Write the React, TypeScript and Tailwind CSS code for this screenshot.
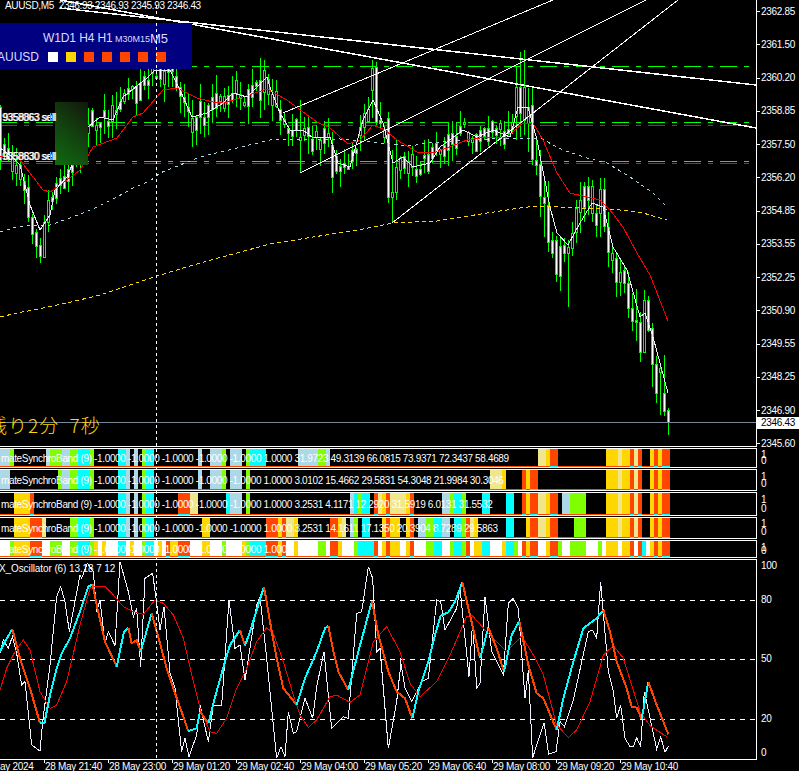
import React from 'react';

const FONT = "font-['Liberation_Sans',Arial,sans-serif]";
const GREEN = '#00ff00';

type Pt = [number, number];

// price chart lines, page coordinates
const maFast: Pt[] = [[0,148],[10,155],[20,165],[30,205],[40,230],[50,215],[55,190],[67,177],[88,127],[100,117],[113,120],[123,97],[147,78],[155,70],[170,70],[180,90],[192,117],[207,113],[223,103],[233,93],[247,97],[267,77],[270,87],[280,113],[290,130],[303,130],[313,138],[330,137],[338,163],[350,167],[363,120],[373,100],[383,123],[393,163],[403,157],[413,167],[430,163],[440,147],[463,130],[477,137],[493,130],[510,137],[518,107],[528,107],[537,140],[550,207],[557,233],[568,245],[580,223],[592,203],[603,207],[613,247],[627,270],[640,317],[645,313],[653,337],[668,393]];
const maRed: Pt[] = [[0,157],[15,155],[20,160],[33,177],[43,190],[50,192],[67,180],[80,170],[93,147],[117,138],[133,117],[143,113],[163,90],[177,88],[197,98],[217,103],[227,102],[240,98],[267,89],[287,100],[303,112],[317,122],[330,128],[348,144],[360,140],[373,125],[385,130],[397,140],[417,152],[433,153],[447,148],[467,140],[487,137],[507,137],[523,123],[533,123],[543,140],[557,173],[570,193],[587,197],[600,200],[610,210],[623,227],[637,253],[650,275],[668,321]];
const maBlue: Pt[] = [[0,232],[17,227],[33,225],[50,225],[67,219],[83,213],[97,207],[117,197],[133,188],[150,181],[160,173],[200,157],[270,140],[340,139],[410,146],[427,143],[503,138],[540,138],[563,150],[587,158],[607,163],[630,177],[653,193],[667,207]];
const maGold: Pt[] = [[0,317],[17,313],[33,310],[67,303],[100,295],[133,284],[157,276],[200,263],[233,254],[270,244],[363,229],[393,223],[437,221],[487,213],[520,208],[537,206],[580,208],[620,210],[643,213],[667,220]];

const pts = (p: Pt[]) => p.map(([x, y]) => `${x},${y}`).join(' ');

const yAt = (line: Pt[], x: number) => {
    for (let i = 1; i < line.length; i++) {
        if (x <= line[i][0]) {
            const [x0, y0] = line[i - 1];
            const [x1, y1] = line[i];
            return y0 + ((x - x0) / (x1 - x0)) * (y1 - y0);
        }
    }
    return line[line.length - 1][1];
};

// x: [top, bottom, high, low, filled]
const knownCandles: Record<number, [number, number, number, number, boolean]> = {
    0: [107, 160, 105, 170, true], 28: [187, 217, 175, 222, true], 32: [217, 234, 214, 244, true], 36: [232, 246, 229, 258, true],
    40: [245, 256, 238, 263, true], 44: [222, 257, 215, 258, false], 48: [200, 222, 190, 232, false],
    260: [80, 100, 58, 118, true], 264: [70, 92, 60, 110, false], 300: [137, 140, 100, 173, false], 332: [145, 177, 132, 193, true],
    372: [68, 90, 60, 118, false], 376: [67, 122, 62, 125, true], 388: [118, 197, 112, 203, true], 392: [192, 197, 150, 223, false],
    396: [167, 192, 140, 200, false], 516: [87, 116, 67, 140, false], 520: [87, 113, 52, 137, true], 524: [87, 120, 50, 135, false],
    528: [107, 123, 88, 152, false], 532: [105, 159, 88, 165, true], 536: [160, 165, 140, 175, true], 540: [164, 196, 150, 217, true],
    544: [197, 203, 181, 237, true], 548: [205, 242, 181, 252, true], 552: [240, 253, 232, 258, true], 556: [240, 274, 236, 282, true],
    560: [246, 276, 238, 291, true], 564: [245, 253, 238, 262, true], 568: [247, 253, 240, 307, false], 572: [233, 248, 222, 256, false],
    576: [208, 232, 200, 243, false], 580: [200, 212, 182, 233, false], 584: [186, 207, 182, 222, true], 588: [186, 200, 177, 215, true],
    592: [186, 213, 180, 222, false], 596: [213, 225, 204, 237, true], 600: [189, 213, 178, 237, false], 604: [189, 226, 178, 232, true],
    608: [227, 252, 212, 267, true], 612: [253, 260, 245, 273, false], 616: [258, 282, 254, 297, true], 620: [272, 282, 258, 296, false],
    624: [270, 283, 266, 293, true], 628: [283, 308, 272, 318, true], 632: [308, 321, 293, 331, true], 636: [320, 322, 289, 341, true],
    640: [322, 352, 312, 362, true], 644: [300, 352, 290, 352, false], 648: [300, 330, 296, 332, true], 652: [328, 364, 323, 387, true],
    656: [364, 393, 356, 403, true], 660: [368, 372, 363, 415, false], 664: [393, 411, 355, 416, true], 668: [410, 422, 408, 435, true],
};

const makeCandles = () => {
    let seed = 20240528;
    const r = () => {
        seed = (seed * 1664525 + 1013904223) % 4294967296;
        return seed / 4294967296;
    };
    const out: { x: number; top: number; bottom: number; hi: number; lo: number; fill: boolean }[] = [];
    for (let x = 0; x <= 668; x += 4) {
        const c = yAt(maFast, x) + (r() - 0.5) * 16;
        const h = 2 + r() * 15;
        let top = Math.round(c - h / 2);
        let bottom = Math.round(c + h / 2);
        let hi = Math.round(top - r() * 18);
        let lo = Math.round(bottom + r() * 18);
        let fill = r() < 0.62;
        const known = knownCandles[x];
        if (known) [top, bottom, hi, lo, fill] = known;
        out.push({ x, top, bottom, hi, lo, fill });
    }
    return out;
};
const candles = makeCandles();

const priceLabels = ['2362.85','2361.50','2360.20','2358.85','2357.50','2356.20','2354.85','2353.55','2352.25','2350.90','2349.55','2348.25','2346.90','2345.60'];
const levelLines = [
    { y: 66, c: GREEN }, { y: 122, c: GREEN }, { y: 125, c: '#ff0000' }, { y: 161, c: GREEN }, { y: 163, c: '#ff0000' },
];

const MainChart = () => (
    <svg width={756} height={446} className="block" shapeRendering="crispEdges">
        {levelLines.map((l) => (
            <line key={l.y} x1={0} x2={756} y1={l.y + 0.5} y2={l.y + 0.5} stroke={l.c} strokeDasharray="17 7 5 7" />
        ))}
        {candles.map((c) => (
            <g key={c.x}>
                <line x1={c.x + 0.5} x2={c.x + 0.5} y1={c.hi} y2={c.lo} stroke={GREEN} />
                <rect x={c.x - 0.5} y={c.top + 0.5} width={2} height={Math.max(c.bottom - c.top, 1)} fill={c.fill ? '#ffffff' : '#000000'} stroke={GREEN} />
            </g>
        ))}
        <polyline points={pts(maGold)} fill="none" stroke="#ffd700" strokeDasharray="4 3" />
        <polyline points={pts(maBlue)} fill="none" stroke="#add8e6" strokeDasharray="3 4" />
        <polyline points={pts(maRed)} fill="none" stroke="#ff0000" />
        <polyline points={pts(maFast)} fill="none" stroke="#e4f2f6" />
        {/* trend lines */}
        <line x1={300} y1={173} x2={650} y2={-2} stroke="#ffffff" />
        <line x1={283} y1={113} x2={560} y2={-3} stroke="#ffffff" />
        <line x1={392} y1={223} x2={678} y2={0} stroke="#ffffff" />
        <line x1={60} y1={8} x2={756} y2={85} stroke="#ffffff" strokeWidth={1.5} />
        <line x1={60} y1={0} x2={756} y2={128} stroke="#ffffff" strokeWidth={1.5} />
        <line x1={0} x2={756} y1={422.5} y2={422.5} stroke="#778899" />
    </svg>
);

const BAND_COLORS: Record<string, string> = {
    L: '#add8e6', G: '#7fff00', C: '#00ffff', Y: '#ffd700', O: '#ff4500', K: '#f0e68c', W: '#ffffff',
};

const parseSegs = (s: string, off: number) =>
    s.split(' ').map((t) => {
        const [a, b] = t.slice(1).split('-').map(Number);
        return { c: t[0], x: (a + off) / 3, w: (b - a) / 3 };
    });

const RIGHT_TAIL = 'Y618-654 K654-666 Y666-690 O690-702 K702-714 O714-726 Y750-762 O762-774 Y774-786 O786-810';
const MID = 'C354-378 L378-390 L402-414 G426-438 C438-462';

const bands = [
    {
        h: 'h-[20px]', inner: 18, leading: 'leading-[6px]',
        left: `L0-30 G30-42 L138-150 G150-186 L186-210 G210-234 C234-270 G270-282 ${MID} L594-606 L630-666 G666-678 L690-726 G738-750 C750-798 L894-954 G954-978 L978-990`,
        right: `K414-438 Y438-450 O450-474 ${RIGHT_TAIL}`,
        text: 'mateSynchroBand (9) -1.0000 -1.0000 -1.0000 -1.0000 -1.0000 1.0000 31.9723 49.3139 66.0815 73.9371 72.3437 58.4689',
    },
    {
        h: 'h-[22px]', inner: 20, leading: 'leading-[7px]',
        left: `L0-30 G174-186 L186-210 G210-234 C234-270 G270-282 ${MID} L594-606 L630-666 G666-678 L690-726 G738-750`,
        right: `K270-306 Y306-318 O366-378 Y378-390 O390-414 ${RIGHT_TAIL}`,
        text: 'mateSynchroBand (9) -1.0000 -1.0000 -1.0000 -1.0000 -1.0000 1.0000 3.0102 15.4662 29.5831 54.3048 21.9984 30.3046',
    },
    {
        h: 'h-[24px]', inner: 22, leading: 'leading-[9px]',
        left: `Y42-90 O90-102 ${MID} O534-570 K570-594 C678-690 L690-726 G738-750 L1050-1062 C1062-1074 G1074-1086 C1086-1110 O1122-1134 K1134-1146 Y1146-1158 O1158-1170 K1170-1200`,
        right: `K0-18 Y18-30 O30-42 L126-150 G150-162 C162-186 G186-198 C246-270 C318-342 O366-378 Y378-390 O390-414 K414-438 Y438-450 O450-474 L486-510 G510-558 ${RIGHT_TAIL}`,
        text: 'mateSynchroBand (9) -1.0000 -1.0000 -1.0000 -1.0000 -1.0000 1.0000 3.2531 4.1171 12.2920 31.5919 6.0131 31.5532',
    },
    {
        h: 'h-[22px]', inner: 20, leading: 'leading-[8px]',
        left: `Y42-90 O90-126 K126-138 G210-234 C234-270 G270-282 ${MID} Y606-630 O798-834 Y834-846 O846-858 K858-882 Y882-894 O990-1014 Y1014-1026 K1026-1038 L1050-1062 G1062-1074 C1086-1110 Y1146-1158 O1158-1170 Y1170-1200`,
        right: `Y18-30 O30-42 L54-78 G78-102 C102-126 L126-150 C162-186 G186-198 O198-210 K210-222 Y222-234 C318-342 Y378-390 O390-414 K414-438 Y438-450 O450-474 G522-558 ${RIGHT_TAIL}`,
        text: 'mateSynchroBand (9) -1.0000 -1.0000 -1.0000 -1.0000 -1.0000 1.0000 3.2531 14.1611 17.1350 20.3904 8.7289 29.5863',
    },
    {
        h: 'h-[18px]', inner: 16, leading: 'leading-[3px]',
        left: 'W0-30 G30-42 Y42-90 O90-126 W126-150 G150-186 W186-210 G210-234 C234-270 G270-282 Y282-294 W294-306 Y306-318 W318-354 C354-378 W378-390 Y390-402 W402-426 G426-438 C438-462 W462-474 Y474-486 W486-498 O498-510 Y510-534 O534-570 W570-606 Y606-630 W630-666 G666-678 W678-726 Y726-738 G738-750 C750-798 O798-834 Y834-846 O846-858 W858-882 Y882-894 W894-954 G954-978 W978-990 O990-1014 Y1014-1026 W1026-1062 G1062-1074 C1074-1122 O1122-1134 W1134-1146 Y1146-1158 O1158-1170 Y1170-1200',
        right: 'W0-18 Y18-30 O30-42 W42-78 G78-102 C102-126 W126-150 G150-162 C162-186 G186-198 O198-210 W210-222 Y222-246 C246-270 W270-306 Y306-318 C318-342 G342-354 W354-366 O366-378 Y378-390 O390-414 W414-438 Y438-450 O450-474 G474-486 W486-510 G510-558 W558-594 G594-606 W606-618 Y618-654 W654-666 Y666-690 O690-702 W702-714 O714-726 C726-738 W738-750 Y750-762 O762-774 Y774-786 O786-810',
        text: 'mateSynchroBand (9) -1.0000 -1.0000 -1.0000 -1.0000 -1.0000 1.0000',
    },
];

const BandPane = ({ band }: { band: (typeof bands)[number] }) => {
    const segs = [...parseSegs(band.left, 0), ...parseSegs(band.right, 1200)];
    const line = band.inner - 1;
    return (
        <div className={`flex ${band.h}`}>
            <div className="relative w-[757px] border-y border-r border-white overflow-hidden">
                <svg width={756} height={band.inner} className="block" shapeRendering="crispEdges">
                    {segs.map((s, i) => (
                        <rect key={i} x={s.x} y={0} width={s.w} height={line} fill={BAND_COLORS[s.c]} />
                    ))}
                    <rect x={0} y={line} width={670} height={1} fill="#ff4500" />
                    {segs.filter((s) => s.c === 'O').map((s, i) => (
                        <rect key={i} x={s.x} y={line} width={s.w} height={1} fill="#00ffff" />
                    ))}
                </svg>
                <span className="absolute left-[1px] top-1/2 -translate-y-1/2 whitespace-pre text-[10px] tracking-[-0.35px] text-white">
                    {band.text}
                </span>
            </div>
            <div className={`flex flex-col justify-center pl-[4px] text-[10px] text-white ${band.leading}`}>
                <span>1</span>
                <span>0</span>
            </div>
        </div>
    );
};

// oscillator traces, in reference crop units (3x, origin y=555)
type Z = Pt[];
const toPage = (p: Z, off = 0): string => p.map(([x, y]) => `${(x + off) / 3},${555 + y / 3}`).join(' ');

const whiteL: Z = [[0,295],[10,255],[25,280],[37,245],[50,295],[65,390],[75,380],[95,570],[120,588],[128,500],[150,330],[170,125],[182,95],[195,140],[208,230],[240,60],[245,70],[262,25],[280,50],[290,170],[300,135],[315,265],[325,230],[345,272],[360,20],[385,110],[400,185],[410,160],[422,335],[435,70],[458,55],[468,130],[480,225],[492,155],[510,355],[525,400],[545,590],[555,550],[567,605],[590,540],[600,450],[625,560],[640,450],[665,450],[687,135],[705,280],[720,270],[735,375],[770,150],[780,125],[800,310],[830,610],[843,575],[855,605],[865,470],[880,535],[890,530],[915,430],[938,490],[950,395],[972,290],[995,520],[1030,485],[1045,490],[1070,175],[1085,170],[1105,35],[1118,70],[1130,290],[1140,280],[1165,580],[1190,440],[1200,350]];
const whiteR: Z = [[0,310],[15,400],[35,440],[65,380],[85,370],[110,135],[122,140],[135,225],[170,160],[180,100],[207,365],[218,200],[230,400],[240,385],[255,125],[275,290],[310,360],[325,145],[340,130],[355,160],[375,430],[385,345],[398,608],[432,503],[446,597],[468,590],[480,500],[493,515],[520,435],[565,230],[578,225],[590,250],[602,80],[625,350],[640,410],[650,490],[662,450],[675,550],[690,575],[700,575],[710,548],[722,575],[733,410],[770,582],[782,545],[795,592],[805,573]];
const redL: Z = [[0,405],[20,340],[45,290],[70,255],[90,285],[120,410],[150,460],[170,450],[200,380],[240,210],[270,100],[280,93],[315,95],[340,120],[370,155],[400,170],[430,178],[465,135],[490,145],[520,180],[550,250],[580,380],[600,460],[630,530],[650,535],[680,490],[710,400],[740,340],[770,260],[800,218],[820,235],[850,320],[880,420],[900,480],[925,517],[950,495],[990,425],[1010,420],[1050,442],[1080,420],[1120,260],[1160,215],[1200,290]];
const redR: Z = [[0,290],[30,385],[60,425],[110,380],[150,300],[200,185],[215,180],[260,230],[320,290],[365,243],[400,300],[430,360],[470,510],[505,547],[530,525],[570,440],[610,300],[640,272],[670,310],[720,470],[750,512],[800,545]];

const thick: { up: boolean; off: number; p: Z }[] = [
    { up: true, off: 0, p: [[0,290],[15,260],[37,222]] },
    { up: false, off: 0, p: [[37,222],[60,310],[90,400],[120,505]] },
    { up: true, off: 0, p: [[120,505],[133,505],[150,420],[170,340],[185,295],[210,250],[240,170],[265,95],[278,88]] },
    { up: false, off: 0, p: [[278,88],[290,150],[315,260],[350,335]] },
    { up: true, off: 0, p: [[350,335],[372,230],[385,218]] },
    { up: false, off: 0, p: [[385,218],[395,265],[410,255],[422,290]] },
    { up: true, off: 0, p: [[422,290],[455,175]] },
    { up: false, off: 0, p: [[455,175],[480,265],[500,340],[520,400],[565,528]] },
    { up: true, off: 0, p: [[565,528],[590,520],[600,470]] },
    { up: false, off: 0, p: [[600,470],[625,505]] },
    { up: true, off: 0, p: [[625,505],[640,445],[675,320],[690,270],[720,225]] },
    { up: false, off: 0, p: [[720,225],[735,272]] },
    { up: true, off: 0, p: [[735,272],[750,230],[792,95]] },
    { up: false, off: 0, p: [[792,95],[810,200],[830,310],[850,400],[890,450]] },
    { up: true, off: 0, p: [[890,450],[915,370],[950,290],[975,220],[985,212]] },
    { up: false, off: 0, p: [[985,212],[1000,290],[1015,350],[1045,405]] },
    { up: true, off: 0, p: [[1045,405],[1075,290],[1116,138]] },
    { up: false, off: 0, p: [[1116,138],[1135,240],[1165,350],[1190,410],[1200,418]] },
    { up: false, off: 1200, p: [[0,418],[15,430],[37,490]] },
    { up: true, off: 1200, p: [[37,490],[55,410],[85,320],[105,240],[122,182],[145,172],[165,140],[187,82]] },
    { up: false, off: 1200, p: [[187,82],[210,180],[240,310]] },
    { up: true, off: 1200, p: [[240,310],[265,218]] },
    { up: false, off: 1200, p: [[265,218],[290,280],[312,350]] },
    { up: true, off: 1200, p: [[312,350],[335,240],[358,198]] },
    { up: false, off: 1200, p: [[358,198],[385,330],[410,415],[430,430],[470,525]] },
    { up: true, off: 1200, p: [[470,525],[490,430],[520,320],[550,220],[590,190],[610,165]] },
    { up: false, off: 1200, p: [[610,165],[630,230],[650,320],[680,400],[695,455],[710,458],[725,492]] },
    { up: true, off: 1200, p: [[725,492],[745,380]] },
    { up: false, off: 1200, p: [[745,380],[770,450],[805,538]] },
];

const OscChart = () => (
    <svg width={756} height={199} viewBox="0 560 756 199" className="block" shapeRendering="crispEdges">
        {[600, 659, 719].map((y) => (
            <line key={y} x1={0} x2={756} y1={y + 0.5} y2={y + 0.5} stroke="#ffffff" strokeDasharray="5 5" />
        ))}
        <polyline points={toPage(whiteL) + ' ' + toPage(whiteR, 1200)} fill="none" stroke="#f0f0ff" strokeWidth={1} />
        <polyline points={toPage(redL) + ' ' + toPage(redR, 1200)} fill="none" stroke="#ff0000" strokeWidth={1} />
        {thick.map((s, i) => (
            <polyline key={i} points={toPage(s.p, s.off)} fill="none" stroke={s.up ? '#00ffff' : '#ff4500'} strokeWidth={2} strokeLinejoin="round" />
        ))}
    </svg>
);

const timeLabels = ['28 May 21:40','28 May 23:00','29 May 01:20','29 May 02:40','29 May 04:00','29 May 05:20','29 May 06:40','29 May 08:00','29 May 09:20','29 May 10:40'];

const App: React.FC = () => {
    return (
        <div className={`relative w-[799px] h-[771px] overflow-hidden bg-black text-white ${FONT}`}>
            <div className="flex flex-col gap-px">
                {/* main chart */}
                <div className="flex h-[447px]">
                    <div className="relative w-[757px] border-b border-r border-white overflow-hidden">
                        <MainChart />
                        <div className="absolute left-[5px] top-0 whitespace-pre text-[10px] leading-[12px] tracking-[-0.35px]">
                            AUUSD,M5  2346.93 2346.93 2345.93 2346.43
                        </div>
                        {/* symbol / timeframe panel */}
                        <div className="absolute left-0 top-[23px] flex h-[46px] w-[192px] flex-col bg-[#000080] text-[#dcdcff]">
                            <div className="flex h-[23px] items-end pl-[43px] text-[12px] leading-[15px] whitespace-pre">
                                <span className="w-[72px] tracking-[-0.1px]">W1D1 H4 H1</span>
                                <span className="pb-[1px] text-[9px] leading-[12px]">M30M15</span>
                                <span className="text-[13px]">M5</span>
                            </div>
                            <div className="flex flex-1 items-center gap-[8px] pb-[1px]">
                                <span className="-ml-[3px] w-[43px] text-[12px] leading-[15px]">AUUSD</span>
                                <div className="h-[10px] w-[10px] bg-white" />
                                <div className="h-[10px] w-[10px] bg-[#ffd700]" />
                                <div className="h-[10px] w-[10px] bg-[#ff4500]" />
                                <div className="h-[10px] w-[10px] bg-[#ff4500]" />
                                <div className="h-[10px] w-[10px] bg-[#ff4500]" />
                                <div className="h-[10px] w-[10px] bg-[#ff4500]" />
                                <div className="h-[10px] w-[10px] bg-[#ff4500]" />
                            </div>
                        </div>
                        {/* order boxes and labels */}
                        <div className="absolute left-[55px] top-[102px] h-[63px] w-[33px] bg-[linear-gradient(40deg,#0f6b10_0%,#12430f_50%,#12170c_100%)]" />
                        <div className="absolute left-[2px] top-[112px] whitespace-pre text-[10px] leading-[12px] tracking-[-0.3px]">9358063 sell</div>
                        <div className="absolute left-[3px] top-[112px] whitespace-pre text-[10px] leading-[12px] tracking-[-0.3px]">9358863 sell</div>
                        <div className="absolute left-[2px] top-[151px] whitespace-pre text-[10px] leading-[12px] tracking-[-0.3px]">9358630 sell</div>
                        <div className="absolute left-[3px] top-[151px] whitespace-pre text-[10px] leading-[12px] tracking-[-0.3px]">9358830 sell</div>
                        <div className="absolute left-[50px] top-[113px] h-[8px] w-[3px] border-x border-[#4aa0ff]" />
                        <div className="absolute left-[50px] top-[152px] h-[8px] w-[3px] border-x border-[#4aa0ff]" />
                        {/* countdown */}
                        <div className="absolute -left-[12px] top-[412px] whitespace-pre text-[19px] leading-[26px] tracking-[1px] font-light text-[#ffd700] font-['Noto_Sans_CJK_JP',sans-serif]">
                            残り2分  7秒
                        </div>
                    </div>
                    <div className="relative flex-1">
                        <div className="-mt-[5px] flex flex-col">
                            {priceLabels.map((p) => (
                                <div key={p} className="flex h-[33.25px] items-center gap-[1px]">
                                    <div className="h-px w-[3px] bg-white" />
                                    <span className="text-[10px] leading-[12px] tracking-[-0.3px]">{p}</span>
                                </div>
                            ))}
                        </div>
                        <div className="absolute left-0 top-[417px] h-[12px] w-[42px] bg-white pl-[4px] text-[10px] leading-[12px] tracking-[-0.3px] text-black">
                            2346.43
                        </div>
                    </div>
                </div>

                {bands.map((b, i) => (
                    <BandPane key={i} band={b} />
                ))}

                {/* oscillator */}
                <div className="flex h-[201px]">
                    <div className="relative w-[757px] border-y border-r border-white overflow-hidden">
                        <OscChart />
                        <span className="absolute -left-[1px] top-[3px] whitespace-pre text-[10px] leading-[12px] tracking-[-0.1px]">
                            X_Oscillator (6) 13.18 7 12
                        </span>
                    </div>
                    <div className="flex flex-col pl-[4px] text-[10px] leading-[12px] tracking-[-0.3px]">
                        <span className="mt-[1px]">100</span>
                        <span className="mt-[22px]">80</span>
                        <span className="mt-[47px]">50</span>
                        <span className="mt-[48px]">20</span>
                        <span className="mt-[22px]">0</span>
                    </div>
                </div>
            </div>

            {/* time axis */}
            <div className="flex h-[11px] -ml-[20px] text-[10px] leading-[12px] tracking-[-0.3px]">
                <div className="w-[64px] whitespace-pre pt-[1px] -indent-[1px]">28 May 2024</div>
                {timeLabels.map((t) => (
                    <div key={t} className="relative w-[64px] whitespace-pre pl-[1px] pt-[1px]">
                        <div className="absolute left-0 top-0 h-[3px] w-px bg-white" />
                        {t}
                    </div>
                ))}
            </div>

            {/* crosshair over all panes */}
            <svg width={1} height={759} className="absolute left-[156px] top-0" shapeRendering="crispEdges">
                <line x1={0.5} x2={0.5} y1={5} y2={759} stroke="#ffffff" strokeDasharray="3 3" />
            </svg>
        </div>
    );
};

export default App;
